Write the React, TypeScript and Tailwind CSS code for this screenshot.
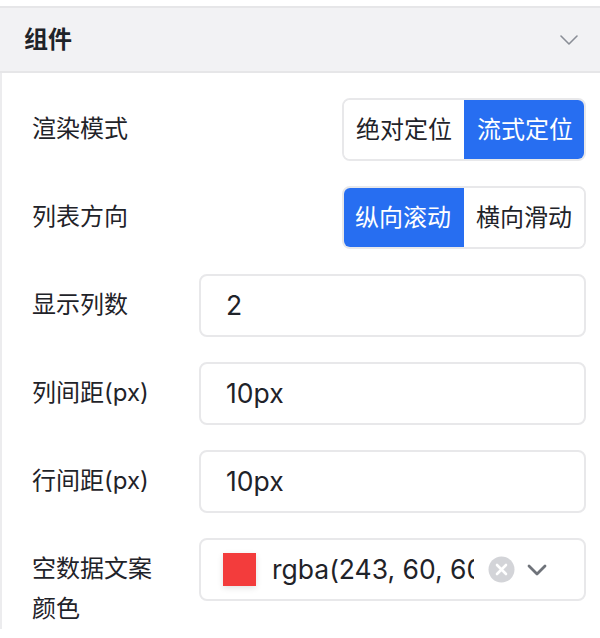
import React from "react";

const FONT = '"Inter", "Noto Sans CJK SC", "Noto Sans", sans-serif';

function Segmented({ options, active }: { options: string[]; active: number }) {
  return (
    <div className="ml-auto flex h-[63px] rounded-[8px] border-2 border-[#e8e8ea] overflow-hidden">
      {options.map((o, i) => (
        <div
          key={o}
          className={
            i === active
              ? "flex items-center px-[13px] bg-[#276ef1] text-white -my-[2px] " + (i === 0 ? "-ml-[2px] rounded-l-[8px]" : "-mr-[2px] rounded-r-[8px]")
              : "flex items-center px-[12px] bg-white text-[#1f2329]"
          }
        >
          {o}
        </div>
      ))}
    </div>
  );
}

function Row({ label, children }: { label: string; children: React.ReactNode }) {
  return (
    <div className="flex items-start">
      <div className="w-[167px] shrink-0 pr-[31px] pt-[11px] leading-[40px] text-[#1f2329]">{label}</div>
      <div className="flex-1 flex min-w-0">{children}</div>
    </div>
  );
}

function Input({ value }: { value: string }) {
  return (
    <div className="flex-1 h-[63px] rounded-[8px] border-2 border-[#e8e8ea] bg-white flex items-center pl-[25px] text-[#1f2329] text-[26.5px]">
      {value}
    </div>
  );
}

export default function App() {
  return (
    <div className="w-[600px] h-[638px] bg-white overflow-hidden text-[24px]" style={{ fontFamily: FONT }}>
      <div className="h-[6px]" />
      <div className="h-[67px] border-y-2 border-[#e6e6e8] bg-[#f2f2f4] flex items-center justify-between pl-[24px] pr-[22px]">
        <span className="font-semibold text-[24px] text-[#1f2329]">组件</span>
        <svg width="18" height="10" viewBox="0 0 18 10" fill="none">
          <path d="M1 1 L9 9 L17 1" stroke="#8a8e96" strokeWidth="1.6" strokeLinecap="round" strokeLinejoin="round" />
        </svg>
      </div>
      <div className="border-l-2 border-[#ececee] pl-[30px] pr-[14px] pt-[25px] flex flex-col gap-[25px]">
        <Row label="渲染模式">
          <Segmented options={["绝对定位", "流式定位"]} active={1} />
        </Row>
        <Row label="列表方向">
          <Segmented options={["纵向滚动", "横向滑动"]} active={0} />
        </Row>
        <Row label="显示列数">
          <Input value="2" />
        </Row>
        <Row label="列间距(px)">
          <Input value="10px" />
        </Row>
        <Row label="行间距(px)">
          <Input value="10px" />
        </Row>
        <Row label="空数据文案颜色">
          <div className="flex-1 h-[63px] rounded-[8px] border-2 border-[#e8e8ea] bg-white flex items-center pl-[22px] pr-[36px] text-[#1f2329] text-[26.5px]">
            <div className="w-[33px] h-[33px] bg-[#f33c3c] shadow-[0_2px_6px_rgba(0,0,0,0.12)] shrink-0" />
            <div className="ml-[16px] w-[202px] overflow-hidden whitespace-nowrap">rgba(243, 60, 60, 1)</div>
            <svg className="ml-[14px] shrink-0" width="27" height="27" viewBox="0 0 27 27">
              <circle cx="13.5" cy="13.5" r="13" fill="#d3d4d8" />
              <path d="M9 9 L18 18 M18 9 L9 18" stroke="white" strokeWidth="2.6" strokeLinecap="round" />
            </svg>
            <svg className="ml-[12px] shrink-0" width="20" height="12" viewBox="0 0 20 12" fill="none">
              <path d="M2 2 L10 10 L18 2" stroke="#6f737a" strokeWidth="2.8" strokeLinecap="round" strokeLinejoin="round" />
            </svg>
          </div>
        </Row>
      </div>
    </div>
  );
}
